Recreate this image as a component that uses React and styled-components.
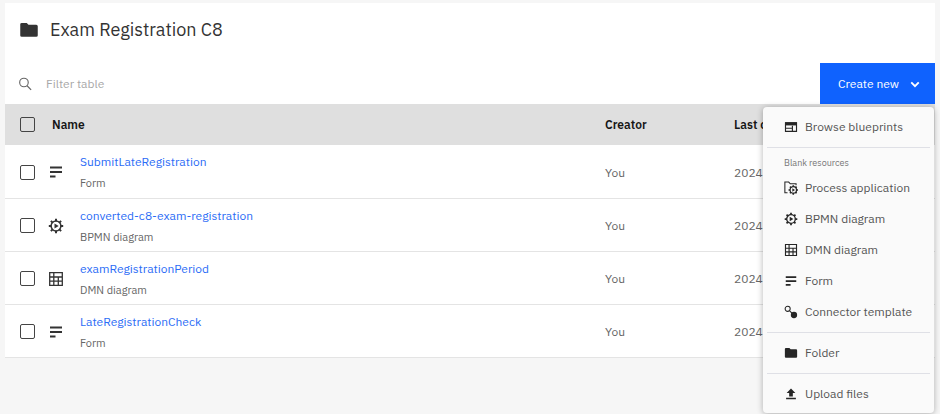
import React, { useState } from "react";
import styled, { createGlobalStyle } from "styled-components";

const GlobalStyle = createGlobalStyle`
  * {
    box-sizing: border-box;
  }
  body {
    margin: 0;
    background: #f6f6f6;
    color: #333;
    font-family: "IBM Plex Sans", Roboto, "Liberation Sans", sans-serif;
    font-size: 12px;
  }
  button, input {
    font: inherit;
  }
`;

const Page = styled.main`
  min-height: 100vh;
  padding: 3px 5px 0;
`;

const Title = styled.header`
  display: flex;
  align-items: center;
  gap: 11px;
  height: 60px;
  padding: 0 14px 6px;
  background: #fff;

  h1 {
    margin: 0;
    font-size: 18px;
    font-weight: 400;
    line-height: 24px;
  }
`;

const Toolbar = styled.div`
  display: flex;
  height: 41px;
  background: #fff;
`;

const Search = styled.label`
  display: flex;
  flex: 1;
  align-items: center;
  gap: 14px;
  padding-left: 13px;
  color: #666;

  input {
    flex: 1;
    padding: 0;
    border: 0;
    outline: 0;
    background: none;
  }
  input::placeholder {
    color: #a8a8a8;
    opacity: 1;
  }
`;

const CreateWrapper = styled.div`
  position: relative;
`;

const CreateButton = styled.button`
  display: flex;
  align-items: center;
  justify-content: space-between;
  width: 115px;
  height: 41px;
  padding: 0 15px 0 18px;
  border: 0;
  background: #0f62fe;
  color: #fff;
`;

const Menu = styled.div`
  position: absolute;
  top: 44px;
  right: 1px;
  width: 171px;
  padding: 4px;
  border-radius: 4px;
  background: #fafafa;
  box-shadow: 0 1px 6px rgba(0, 0, 0, 0.3);
`;

const MenuItem = styled.button`
  display: flex;
  align-items: center;
  gap: 7px;
  width: 100%;
  height: 31px;
  padding: 0 0 0 17px;
  border: 0;
  background: none;
  color: #555;
  white-space: nowrap;

  svg {
    color: #262626;
  }
`;

const MenuHeading = styled.div`
  padding: 3px 0 1px 17px;
  color: #777;
  font-size: 9px;
  line-height: 16px;
`;

const Divider = styled.hr`
  height: 1px;
  margin: 5px 0 4px;
  border: 0;
  background: #dfe0e6;
`;

const Table = styled.table`
  width: 100%;
  table-layout: fixed;
  border-collapse: collapse;
  background: #fff;

  th, td {
    padding: 0;
    text-align: left;
    white-space: nowrap;
  }
  th {
    height: 41px;
    background: #dfdfdf;
    color: #161616;
    font-weight: 600;
  }
  td {
    height: 53px;
    padding-top: 2px;
    border-bottom: 1px solid #e4e4e4;
    color: #666;
  }
  svg {
    display: block;
    color: #333;
  }
`;

const Col = styled.col`
  width: ${(props) => props.$width};
`;

const CheckCell = styled.td`
  && {
    padding-left: 15px;
  }
`;

const NameHead = styled.th`
  && {
    padding-left: 4px;
  }
`;

const Checkbox = styled.input.attrs({ type: "checkbox" })`
  display: block;
  appearance: none;
  width: 15px;
  height: 15px;
  margin: 0;
  border: 1px solid #444;
  border-radius: 2px;

  &:checked {
    background: #333;
  }
`;

const FileLink = styled.a`
  display: block;
  color: #2b6cf6;
  line-height: 18px;
  text-decoration: none;
`;

const FileType = styled.div`
  padding-top: 4px;
  color: #666;
  font-size: 11px;
  line-height: 16px;
`;

const Svg = ({ size = 16, children }) => (
  <svg width={size} height={size} viewBox="0 0 16 16" fill="none" stroke="currentColor" aria-hidden="true">
    {children}
  </svg>
);

const FolderIcon = ({ size }) => (
  <Svg size={size}>
    <path d="M1 3.4Q1 2.4 2.2 2.4h4l1.4 1.4h6.2q1.2 0 1.2 1.2v7.3q0 1.1-1.2 1.1H2.2Q1 13.4 1 12.3Z" fill="currentColor" stroke="none" />
  </Svg>
);

const SearchIcon = () => (
  <Svg size={14}>
    <circle cx="6.8" cy="6.3" r="4.9" strokeWidth="1.3" />
    <path d="m10.4 10 4.6 4.8" strokeWidth="1.3" />
  </Svg>
);

const FormIcon = ({ size }) => (
  <Svg size={size}>
    <path d="M2 3.5h12M2 8h12M2 12.5h5.5" strokeWidth="2" />
  </Svg>
);

const gearTeeth = "M8 .8v2.4M8 12.8v2.4M.8 8h2.4M12.8 8h2.4M2.9 2.9l1.7 1.7M11.4 11.4l1.7 1.7M2.9 13.1l1.7-1.7M11.4 4.6l1.7-1.7";

const GearIcon = ({ size }) => (
  <Svg size={size}>
    <circle cx="8" cy="8" r="4.9" strokeWidth="1.5" />
    <path d={gearTeeth} strokeWidth="2" />
    <path d="m6.5 5.4 4.2 2.6-4.2 2.6Z" fill="currentColor" stroke="none" />
  </Svg>
);

const TableIcon = ({ size }) => (
  <Svg size={size}>
    <path d="M1.7 1.7h12.6v12.6H1.7ZM1.7 6h12.6M1.7 10.2h12.6M5.8 1.7v12.6M10.3 6v8.3" strokeWidth="1.3" />
  </Svg>
);

const BlueprintIcon = ({ size }) => (
  <Svg size={size}>
    <path d="M1.7 3.2h12.6v9.8H1.7ZM1.7 9.4h7.6M9.6 6.6V13" strokeWidth="1.3" />
    <path d="M1.2 2.6h13.6v3.6H1.2Z" fill="currentColor" stroke="none" />
  </Svg>
);

const ProcessIcon = () => (
  <Svg size={14}>
    <path d="M4 13.4H1V1.2h4.4l1.8 2h6.6v1.6" strokeWidth="1.2" />
    <g transform="translate(4.6 4.2) scale(.75)">
      <circle cx="8" cy="8" r="4.9" strokeWidth="1.9" />
      <path d={gearTeeth} strokeWidth="2.4" />
      <path d="m6.5 5.4 4.2 2.6-4.2 2.6Z" fill="currentColor" stroke="none" />
    </g>
  </Svg>
);

const ConnectorIcon = () => (
  <Svg size={14}>
    <circle cx="4.2" cy="4.4" r="2.9" strokeWidth="1.2" />
    <path d="m6.4 6.6 3 3" strokeWidth="1.2" />
    <circle cx="11.4" cy="11.4" r="3.6" fill="currentColor" stroke="none" />
  </Svg>
);

const UploadIcon = () => (
  <Svg size={14}>
    <path d="M8 1.6 3 6.8h2.9v4h4.2v-4H13ZM2.4 12.4h11.2V14H2.4Z" fill="currentColor" stroke="none" />
  </Svg>
);

const ChevronIcon = () => (
  <Svg size={10}>
    <path d="m2 5.5 6 6 6-6" strokeWidth="3" />
  </Svg>
);

const files = [
  { name: "SubmitLateRegistration", type: "Form", icon: FormIcon },
  { name: "converted-c8-exam-registration", type: "BPMN diagram", icon: GearIcon },
  { name: "examRegistrationPeriod", type: "DMN diagram", icon: TableIcon },
  { name: "LateRegistrationCheck", type: "Form", icon: FormIcon },
];

const resources = [
  { label: "Process application", icon: ProcessIcon },
  { label: "BPMN diagram", icon: GearIcon },
  { label: "DMN diagram", icon: TableIcon },
  { label: "Form", icon: FormIcon },
  { label: "Connector template", icon: ConnectorIcon },
];

const App = () => {
  const [open, setOpen] = useState(true);
  const [filter, setFilter] = useState("");

  const shown = files.filter((file) => file.name.toLowerCase().includes(filter.toLowerCase()));

  return (
    <Page>
      <GlobalStyle />
      <Title>
        <FolderIcon size={20} />
        <h1>Exam Registration C8</h1>
      </Title>
      <Toolbar>
        <Search>
          <SearchIcon />
          <input
            aria-label="Filter table"
            placeholder="Filter table"
            value={filter}
            onChange={(e) => setFilter(e.target.value)}
          />
        </Search>
        <CreateWrapper>
          <CreateButton aria-expanded={open} onClick={() => setOpen(!open)}>
            Create new
            <ChevronIcon />
          </CreateButton>
          {open && (
            <Menu>
              <MenuItem><BlueprintIcon size={14} />Browse blueprints</MenuItem>
              <Divider />
              <MenuHeading>Blank resources</MenuHeading>
              {resources.map(({ label, icon: Icon }) => (
                <MenuItem key={label}><Icon size={14} />{label}</MenuItem>
              ))}
              <Divider />
              <MenuItem><FolderIcon size={14} />Folder</MenuItem>
              <Divider />
              <MenuItem><UploadIcon />Upload files</MenuItem>
            </Menu>
          )}
        </CreateWrapper>
      </Toolbar>
      <Table>
        <colgroup>
          <Col $width="43px" />
          <Col $width="32px" />
          <Col />
          <Col $width="129px" />
          <Col $width="201px" />
        </colgroup>
        <thead>
          <tr>
            <CheckCell as="th"><Checkbox aria-label="Select all" /></CheckCell>
            <NameHead colSpan={2}>Name</NameHead>
            <th>Creator</th>
            <th>Last c</th>
          </tr>
        </thead>
        <tbody>
          {shown.map(({ name, type, icon: Icon }) => (
            <tr key={name}>
              <CheckCell><Checkbox aria-label={"Select " + name} /></CheckCell>
              <td><Icon size={16} /></td>
              <td>
                <FileLink href="#">{name}</FileLink>
                <FileType>{type}</FileType>
              </td>
              <td>You</td>
              <td>2024</td>
            </tr>
          ))}
        </tbody>
      </Table>
    </Page>
  );
};

export default App;
